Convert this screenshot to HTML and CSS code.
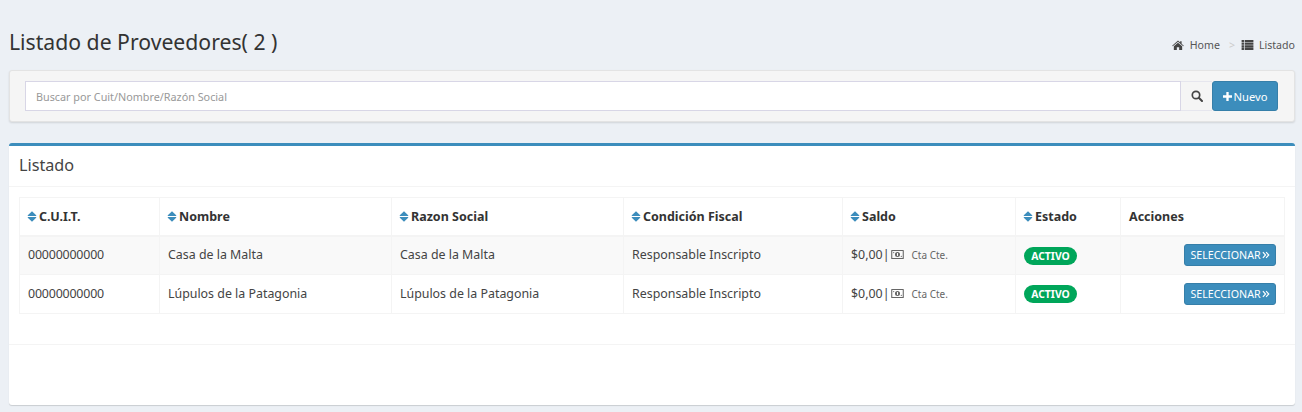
FILE: index.html
```html
<!DOCTYPE html>
<html lang="es">
<head>
<meta charset="utf-8">
<title>Listado de Proveedores</title>
<link rel="stylesheet" href="styles.css">
</head>
<body>
<svg class="sprite" width="0" height="0" aria-hidden="true">
  <symbol id="sort" viewBox="0 0 10 11"><path d="M5 0.3 9.2 4.3a.35.35 0 0 1-.25.6H1.05a.35.35 0 0 1-.25-.6zM5 10.7 9.2 6.7a.35.35 0 0 0-.25-.6H1.05a.35.35 0 0 0-.25.6z"/></symbol>
  <symbol id="money" viewBox="0 0 14 10"><path fill-rule="evenodd" d="M.6 0h12.8c.33 0 .6.27.6.6v8.8c0 .33-.27.6-.6.6H.6a.6.6 0 0 1-.6-.6V.6C0 .27.27 0 .6 0zM1.2 1.2v7.6h11.6V1.2zM7 2.2a2.8 2.8 0 1 1 0 5.6 2.8 2.8 0 0 1 0-5.6zM2.2 2.2h1.6L2.2 3.8zM11.8 7.8h-1.6l1.6-1.6z"/><rect x="6.4" y="3.4" width="1.2" height="3.2" fill="#fff"/></symbol>
  <symbol id="chev" viewBox="0 0 9 9"><path fill="none" stroke="currentColor" stroke-width="1.3" d="M1 1.2 4 4.5 1 7.8M4.6 1.2 7.6 4.5 4.6 7.8"/></symbol>
</svg>

<header class="page-head">
  <h1 class="title">Listado de Proveedores( 2 )</h1>
  <nav class="crumbs">
    <svg class="ic-home" viewBox="0 0 14 12"><path d="M7 .6 9.6 2.9V1.5h1.7v2.9L14 6.8l-.7.8L7 2.1.7 7.6 0 6.8zM2 7.5 7 3.2l5 4.3V12H8.4V8.7H5.6V12H2z"/></svg>
    <span class="crumb-home">Home</span>
    <span class="crumb-sep">&gt;</span>
    <svg class="ic-list" viewBox="0 0 13 11"><path d="M0 0h2.6v2.4H0zM3.4 0H13v2.4H3.4zM0 2.9h2.6v2.4H0zM3.4 2.9H13v2.4H3.4zM0 5.8h2.6v2.4H0zM3.4 5.8H13v2.4H3.4zM0 8.6h2.6V11H0zM3.4 8.6H13V11H3.4z"/></svg>
    <span>Listado</span>
  </nav>
</header>

<section class="search-card">
  <div class="search-box">Buscar por Cuit/Nombre/Razón Social</div>
  <div class="search-addon">
    <svg viewBox="0 0 12 12"><circle cx="5" cy="5" r="3.7" fill="none" stroke="currentColor" stroke-width="1.7"/><path d="M7.8 7.8 11 11" stroke="currentColor" stroke-width="2" stroke-linecap="round"/></svg>
  </div>
  <button class="btn-new" type="button"><svg viewBox="0 0 10 10"><path d="M3.7 0h2.6v3.7H10v2.6H6.3V10H3.7V6.3H0V3.7h3.7z"/></svg>Nuevo</button>
</section>

<section class="panel">
  <h2 class="panel-title">Listado</h2>
  <div class="panel-body">
    <table class="grid">
      <thead>
        <tr>
          <th class="c1"><svg class="sort"><use href="#sort"/></svg>C.U.I.T.</th>
          <th class="c2"><svg class="sort"><use href="#sort"/></svg>Nombre</th>
          <th class="c3"><svg class="sort"><use href="#sort"/></svg>Razon Social</th>
          <th class="c4"><svg class="sort"><use href="#sort"/></svg>Condición Fiscal</th>
          <th class="c5"><svg class="sort"><use href="#sort"/></svg>Saldo</th>
          <th class="c6"><svg class="sort"><use href="#sort"/></svg>Estado</th>
          <th class="c7">Acciones</th>
        </tr>
      </thead>
      <tbody>
        <tr class="odd">
          <td class="cuit">00000000000</td>
          <td>Casa de la Malta</td>
          <td>Casa de la Malta</td>
          <td>Responsable Inscripto</td>
          <td>$0,00<span class="pipe">|</span><svg class="money"><use href="#money"/></svg><span class="cta">Cta Cte.</span></td>
          <td class="ctl"><span class="badge">ACTIVO</span></td>
          <td class="ctl act"><button class="btn-sel" type="button">SELECCIONAR<svg><use href="#chev"/></svg></button></td>
        </tr>
        <tr>
          <td class="cuit">00000000000</td>
          <td>Lúpulos de la Patagonia</td>
          <td>Lúpulos de la Patagonia</td>
          <td>Responsable Inscripto</td>
          <td>$0,00<span class="pipe">|</span><svg class="money"><use href="#money"/></svg><span class="cta">Cta Cte.</span></td>
          <td class="ctl"><span class="badge">ACTIVO</span></td>
          <td class="ctl act"><button class="btn-sel" type="button">SELECCIONAR<svg><use href="#chev"/></svg></button></td>
        </tr>
      </tbody>
    </table>
  </div>
  <div class="panel-foot"></div>
</section>
</body>
</html>
```

FILE: styles.css
```css
* { box-sizing: border-box; }
html, body { height: 100%; }
body {
  margin: 0;
  padding: 0 7px 0 9px;
  background: #ecf0f5;
  color: #444;
  font-family: "Noto Sans", "Open Sans", sans-serif;
  font-size: 12.4px;
  overflow: hidden;
}
.sprite { position: absolute; }

.page-head {
  display: flex;
  justify-content: space-between;
  align-items: flex-end;
  height: 70px;
  padding-bottom: 14px;
}
.title {
  margin: 0;
  font-size: 21.2px;
  font-weight: 400;
  line-height: 28px;
  color: #333;
}
.crumbs {
  display: flex;
  align-items: center;
  font-size: 10.6px;
  color: #555;
  line-height: 14px;
  margin-bottom: 4px;
}
.ic-home { width: 12px; height: 10px; fill: #444; margin-right: 6px; }
.crumb-sep { color: #ccc; margin: 0 6px 0 9px; }
.ic-list { width: 13px; height: 10px; fill: #444; margin-right: 5px; }

.search-card {
  display: flex;
  height: 52px;
  padding: 10px 16px 10px 15px;
  background: #f5f5f5;
  border: 1px solid #e3e3e3;
  border-radius: 3px;
  box-shadow: 0 1px 2px rgba(0,0,0,.12);
}
.search-box {
  flex: 1;
  height: 30px;
  padding: 0 10px;
  background: #fff;
  border: 1px solid #d8d6e6;
  font-size: 10.8px;
  line-height: 29px;
  color: #999;
}
.search-addon {
  display: flex;
  align-items: center;
  justify-content: center;
  width: 31px;
  height: 30px;
  color: #444;
  background: #f5f5f5;
  border-top: 1px solid #e6e6ee;
  border-bottom: 1px solid #e6e6ee;
}
.search-addon svg { width: 12px; height: 12px; }
.btn-new {
  display: flex;
  align-items: center;
  justify-content: center;
  width: 66px;
  height: 30px;
  padding: 0;
  color: #fff;
  background: #3c8dbc;
  border: 1px solid #367fa9;
  border-radius: 3px;
  font: 11.2px "Noto Sans", sans-serif;
}
.btn-new svg { width: 9px; height: 9px; fill: #fff; margin-right: 2px; }

.panel {
  margin-top: 21px;
  height: 262px;
  background: #fff;
  border-top: 3px solid #3c8dbc;
  border-radius: 3px;
  box-shadow: 0 1px 1px rgba(0,0,0,.15);
}
.panel-title {
  margin: 0;
  height: 41px;
  padding: 0 10px;
  border-bottom: 1px solid #f4f4f4;
  font-size: 16.2px;
  font-weight: 400;
  line-height: 38px;
  color: #444;
}
.panel-body { padding: 10px 10px 0; height: 157px; }
.panel-foot { border-top: 1px solid #f4f4f4; }

.grid {
  width: 100%;
  table-layout: fixed;
  border-collapse: collapse;
  border: 1px solid #f4f4f4;
}
.grid th, .grid td {
  border: 1px solid #f4f4f4;
  padding: 0 8px;
  text-align: left;
  white-space: nowrap;
}
.grid th { height: 38px; font-size: 12.5px; font-weight: 700; color: #333; border-bottom-width: 2px; }
.grid td { height: 39px; font-size: 12.4px; color: #444; padding-bottom: 2px; }
.grid .ctl { padding-bottom: 0; }
.grid .odd td { background: #f9f9f9; }
.grid .cuit { letter-spacing: -.18px; }
.c1 { width: 140px; }
.c2, .c3 { width: 232px; }
.c4 { width: 219px; }
.c5 { width: 173px; }
.c6 { width: 105px; }
.sort { width: 10px; height: 11px; fill: #3c8dbc; margin: 0 2px 0 -1px; vertical-align: -1px; }
.pipe { margin: 0 1px 0 0; }
.money { width: 13px; height: 9px; fill: #666; vertical-align: 0; }
.cta { font-size: 10px; color: #666; margin-left: 8px; }
.badge {
  display: inline-block;
  width: 53px;
  text-align: center;
  height: 18px;
  line-height: 18px;
  font-size: 10.4px;
  font-weight: 700;
  color: #fff;
  background: #00a65a;
  border-radius: 9px;
  vertical-align: middle;
}
.grid .act { text-align: right; }
.btn-sel {
  display: inline-flex;
  align-items: center;
  justify-content: center;
  width: 92px;
  height: 22px;
  padding: 0;
  color: #fff;
  background: #3c8dbc;
  border: 1px solid #367fa9;
  border-radius: 3px;
  font: 10.7px "Noto Sans", sans-serif;
  vertical-align: middle;
}
.btn-sel svg { width: 8px; height: 8px; margin-left: 1px; }
```
